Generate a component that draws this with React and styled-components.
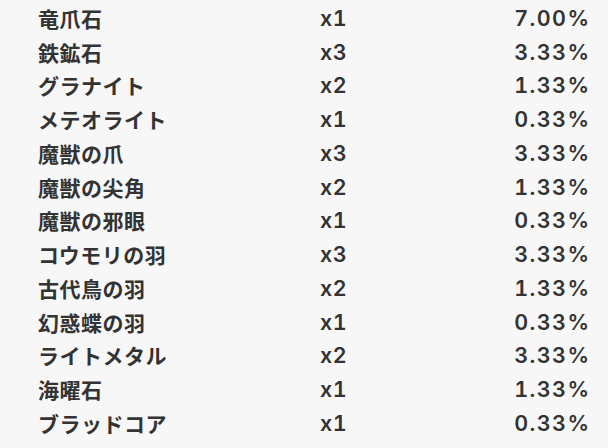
import React from 'react';
import styled, { createGlobalStyle } from 'styled-components';

const GlobalStyle = createGlobalStyle`
  html, body {
    margin: 0;
    padding: 0;
    background: #f7f7f7;
  }
`;

const Table = styled.div`
  display: grid;
  grid-template-columns: 282px 1fr auto;
  grid-auto-rows: 33.75px;
  align-items: center;
  padding: 1px 19px 0 38px;
  color: #333333;
  font-family: Inter, "Noto Sans CJK JP", sans-serif;
  font-weight: 600;
  font-size: 21.5px;
  font-variant-numeric: tabular-nums;
`;

const Name = styled.div`
  font-family: "Noto Sans CJK JP", sans-serif;
  font-size: 21px;
  font-weight: 700;
  letter-spacing: 0.5px;
`;

const Qty = styled.div`
  letter-spacing: 0.5px;
`;

const Rate = styled.div`
  text-align: right;
  letter-spacing: 1.4px;
  margin-right: -1.4px;
`;

const drops = [
  ['竜爪石', 'x1', '7.00%'],
  ['鉄鉱石', 'x3', '3.33%'],
  ['グラナイト', 'x2', '1.33%'],
  ['メテオライト', 'x1', '0.33%'],
  ['魔獣の爪', 'x3', '3.33%'],
  ['魔獣の尖角', 'x2', '1.33%'],
  ['魔獣の邪眼', 'x1', '0.33%'],
  ['コウモリの羽', 'x3', '3.33%'],
  ['古代鳥の羽', 'x2', '1.33%'],
  ['幻惑蝶の羽', 'x1', '0.33%'],
  ['ライトメタル', 'x2', '3.33%'],
  ['海曜石', 'x1', '1.33%'],
  ['ブラッドコア', 'x1', '0.33%'],
];

export default function App() {
  return (
    <>
      <GlobalStyle />
      <Table>
        {drops.map(([name, qty, rate]) => (
          <React.Fragment key={name}>
            <Name>{name}</Name>
            <Qty>{qty}</Qty>
            <Rate>{rate}</Rate>
          </React.Fragment>
        ))}
      </Table>
    </>
  );
}
